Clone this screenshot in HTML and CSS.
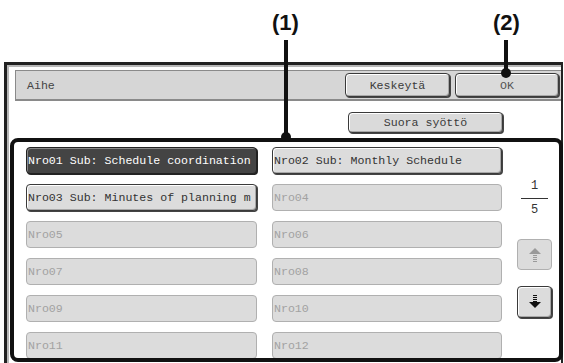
FILE: index.html
```html
<!DOCTYPE html>
<html lang="fi">
<head>
  <meta charset="UTF-8">
  <title>Aihe</title>
  <link rel="stylesheet" href="styles.css">
</head>
<body>
  <div class="page">
    <!-- selitteet -->
    <div class="callout callout-1">
      <span class="callout-label">(1)</span>
      <span class="callout-line"></span>
      <span class="callout-dot"></span>
    </div>
    <div class="callout callout-2">
      <span class="callout-label">(2)</span>
      <span class="callout-line"></span>
      <span class="callout-dot"></span>
    </div>

    <div class="frame">
      <div class="titlebar">
        <span class="title">Aihe</span>
        <button class="btn btn-cancel">Keskeytä</button>
        <button class="btn btn-ok">OK</button>
      </div>

      <div class="direct-row">
        <button class="btn btn-direct">Suora syöttö</button>
      </div>

      <div class="panel">
        <div class="list">
          <button class="item selected">Nro01 Sub: Schedule coordination</button>
          <button class="item">Nro02 Sub: Monthly Schedule</button>
          <button class="item">Nro03 Sub: Minutes of planning m</button>
          <button class="item empty">Nro04</button>
          <button class="item empty">Nro05</button>
          <button class="item empty">Nro06</button>
          <button class="item empty">Nro07</button>
          <button class="item empty">Nro08</button>
          <button class="item empty">Nro09</button>
          <button class="item empty">Nro10</button>
          <button class="item empty">Nro11</button>
          <button class="item empty">Nro12</button>
        </div>

        <div class="side">
          <div class="pager">
            <span class="page-num">1</span>
            <span class="page-rule"></span>
            <span class="page-num">5</span>
          </div>
          <button class="arrow arrow-up disabled">
            <svg width="12" height="14" viewBox="0 0 12 14">
              <polygon points="6,0 12,6 0,6" fill="#9a9a9a"/>
              <rect x="4" y="7" width="4" height="1" fill="#9a9a9a"/>
              <rect x="4" y="9" width="4" height="1" fill="#9a9a9a"/>
              <rect x="4" y="11" width="4" height="1" fill="#9a9a9a"/>
              <rect x="4" y="13" width="4" height="1" fill="#9a9a9a"/>
            </svg>
          </button>
          <button class="arrow arrow-down">
            <svg width="12" height="14" viewBox="0 0 12 14">
              <rect x="4" y="0" width="4" height="1" fill="#111"/>
              <rect x="4" y="2" width="4" height="1" fill="#111"/>
              <rect x="4" y="4" width="4" height="1" fill="#111"/>
              <rect x="4" y="6" width="4" height="1" fill="#111"/>
              <polygon points="0,7 12,7 6,13" fill="#111"/>
            </svg>
          </button>
        </div>
      </div>
    </div>
  </div>
</body>
</html>
```

FILE: styles.css
```css
html, body {
  margin: 0;
  padding: 0;
  height: 363px;
  overflow: hidden;
  background-color: #fff;
}

body {
  font-family: 'Liberation Mono', 'DejaVu Sans Mono', monospace;
  font-size: 11.6px;
  color: #333;
}

.page {
  position: relative;
  width: 564px;
  height: 363px;
  padding-top: 62px;
  box-sizing: border-box;
}

/* selitteet (1) ja (2) */
.callout {
  position: absolute;
  top: 0;
  z-index: 5;
}

.callout-1 { left: 272px; }
.callout-2 { left: 493px; }

.callout-label {
  position: absolute;
  top: 12px;
  left: 0;
  font-family: 'Liberation Sans', Arial, sans-serif;
  font-weight: bold;
  font-size: 22px;
  line-height: 22px;
  color: #111;
  white-space: nowrap;
}

.callout-line {
  position: absolute;
  top: 40px;
  width: 4px;
  background-color: #111;
}

.callout-dot {
  position: absolute;
  width: 10px;
  height: 10px;
  border-radius: 50%;
  background-color: #111;
}

.callout-1 .callout-line { left: 12px; height: 97px; }
.callout-1 .callout-dot { left: 9px; top: 132px; }
.callout-2 .callout-line { left: 11px; height: 33px; }
.callout-2 .callout-dot { left: 8px; top: 68px; }

/* ikkuna */
.frame {
  margin-left: 4px;
  width: 559px;
  height: 310px;
  box-sizing: border-box;
  border: 3px solid #222;
  border-bottom: none;
  border-right-width: 2px;
  box-shadow: inset 2px 2px 0 #b8b8b8;
  padding-top: 5px;
}

.titlebar {
  display: flex;
  align-items: center;
  margin-left: 8px;
  height: 31px;
  box-sizing: border-box;
  background-color: #d6d6d6;
  border: 1px solid #8a8a8a;
  border-right: none;
  border-bottom-width: 2px;
}

.title {
  flex: 1;
  padding-left: 11px;
  color: #444;
}

.btn {
  font-family: inherit;
  font-size: 11.6px;
  color: #3a3a3a;
  background-color: #dadada;
  border: 1px solid #3a3a3a;
  border-radius: 4px;
  box-shadow: inset 1px 1px 0 #fff, inset -1px -1px 0 #a8a8a8, 1px 1px 0 #444;
  padding: 0;
  height: 24px;
}

.btn-cancel {
  width: 105px;
  margin-right: 5px;
}

.btn-ok {
  width: 104px;
  margin-right: 2px;
  color: #555;
}

.direct-row {
  margin-top: 11px;
  padding-left: 341px;
  height: 22px;
}

.btn-direct {
  width: 155px;
  height: 21px;
}

/* lista */
.panel {
  display: flex;
  margin: 4px -2px 0 3px;
  height: 224px;
  box-sizing: border-box;
  border: 4px solid #111;
  border-radius: 8px;
  background-color: #fff;
  padding: 5px 0 0 12px;
  overflow: hidden;
}

.list {
  display: grid;
  grid-template-columns: 231px 230px;
  grid-auto-rows: 27px;
  column-gap: 15px;
  row-gap: 10px;
}

.item {
  font-family: inherit;
  font-size: 11.6px;
  text-align: left;
  white-space: nowrap;
  overflow: hidden;
  padding: 0 0 0 1px;
  color: #333;
  background-color: #dcdcdc;
  border: 1px solid #3a3a3a;
  border-radius: 4px;
  box-shadow: inset 1px 1px 0 #fff, inset -1px -1px 0 #a8a8a8, 1px 1px 0 #444;
}

.item.selected {
  background-color: #444;
  color: #fff;
  border-color: #222;
  box-shadow: inset 1px 1px 0 #888, 1px 1px 0 #222;
}

.item.empty {
  color: #a2a2a2;
  border-color: #b0b0b0;
  box-shadow: none;
}

.side {
  display: flex;
  flex-direction: column;
  align-items: center;
  width: 35px;
  margin-left: 15px;
  padding-top: 31px;
}

.pager {
  display: flex;
  flex-direction: column;
  align-items: center;
  width: 27px;
}

.page-num {
  font-size: 12px;
  line-height: 16px;
  color: #333;
}

.page-rule {
  display: block;
  width: 27px;
  height: 1px;
  margin: 4px 0 3px;
  background-color: #333;
}

.arrow {
  display: flex;
  align-items: center;
  justify-content: center;
  width: 35px;
  padding: 0;
  background-color: #dcdcdc;
  border-radius: 4px;
}

.arrow-up {
  margin-top: 21px;
  height: 31px;
  border: 1px solid #b0b0b0;
}

.arrow-down {
  margin-top: 16px;
  height: 32px;
  border: 1px solid #3a3a3a;
  box-shadow: inset 1px 1px 0 #fff, inset -1px -1px 0 #a8a8a8, 1px 1px 0 #444;
}
```
